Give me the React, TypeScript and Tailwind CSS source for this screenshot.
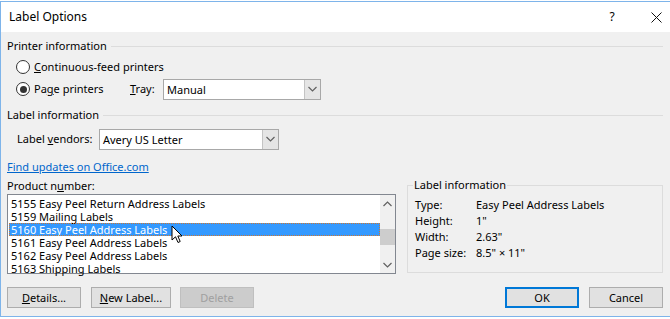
import React from 'react';

const items = [
  '5155 Easy Peel Return Address Labels',
  '5159 Mailing Labels',
  '5160 Easy Peel Address Labels',
  '5161 Easy Peel Address Labels',
  '5162 Easy Peel Address Labels',
  '5163 Shipping Labels',
];

const info = [
  ['Type:', 'Easy Peel Address Labels'],
  ['Height:', '1"'],
  ['Width:', '2.63"'],
  ['Page size:', '8.5" \u00d7 11"'],
];

function Chevron({ up = false }: { up?: boolean }) {
  return (
    <svg width="9" height="6" viewBox="0 0 9 6" className="block">
      <path d={up ? 'M0.5 5 L4.5 1 L8.5 5' : 'M0.5 1 L4.5 5 L8.5 1'} fill="none" stroke="#606060" strokeWidth="1.2" />
    </svg>
  );
}

function Radio({ checked, children }: { checked?: boolean; children: React.ReactNode }) {
  return (
    <div className="flex items-center h-4 whitespace-nowrap">
      <span className="w-[14px] h-[14px] rounded-full border border-[#333] bg-white flex items-center justify-center ml-[9px]">
        {checked && <span className="w-[7px] h-[7px] rounded-full bg-[#333]" />}
      </span>
      <span className="ml-[4px]">{children}</span>
    </div>
  );
}

function Select({ value, width }: { value: string; width: string }) {
  return (
    <div className={`${width} h-[21px] border border-[#a8a8a8] bg-white flex`}>
      <span className="flex-1 pl-[3px] leading-[19px]">{value}</span>
      <span className="w-[16px] bg-[#e5e5e5] border-l border-[#c4c4c4] flex items-center justify-center">
        <Chevron />
      </span>
    </div>
  );
}

function Section({ title }: { title: string }) {
  return (
    <div className="flex items-center h-4">
      <span>{title}</span>
      <span className="flex-1 h-px bg-[#dcdcdc] ml-[4px] mr-[7px]" />
    </div>
  );
}

function Btn({ children, disabled, primary, className = '' }: { children: React.ReactNode; disabled?: boolean; primary?: boolean; className?: string }) {
  return (
    <div
      className={`h-[21px] flex items-center justify-center ${className} ${
        disabled
          ? 'bg-[#cccccc] border border-[#bfbfbf] text-[#a0a0a0]'
          : primary
          ? 'bg-[#e1e1e1] border-2 border-[#0078d7]'
          : 'bg-[#e1e1e1] border border-[#adadad]'
      }`}
    >
      {children}
    </div>
  );
}

export default function App() {
  return (
    <div className="w-[670px] h-[319px] bg-white overflow-hidden text-[11px] text-black font-['Noto_Sans',sans-serif] leading-4 relative">
      <div className="h-[1px] bg-white" />
      <div className="h-[316px] border-t border-l border-b border-[#7eb4ea] flex flex-col">
        {/* title bar */}
        <div className="h-[30px] bg-white flex items-center pl-[8px] shrink-0 text-[12px]">
          <span className="flex-1">Label Options</span>
          <span className="w-[20px] text-center">?</span>
          <span className="w-[24px] ml-[22px] mr-[2px] flex justify-center">
            <svg width="11" height="11" viewBox="0 0 11 11">
              <path d="M0.5 0.5 L10.5 10.5 M10.5 0.5 L0.5 10.5" stroke="#111" strokeWidth="1" />
            </svg>
          </span>
        </div>

        {/* body */}
        <div className="flex-1 bg-[#f0f0f0] pl-[6px] flex flex-col">
          <div className="mt-[6px]">
            <Section title="Printer information" />
          </div>
          <div className="mt-[5px]">
            <Radio>
              <u>C</u>ontinuous-feed printers
            </Radio>
          </div>
          <div className="mt-[3px] flex items-center h-[22px]">
            <div className="w-[123px]">
              <Radio checked>
                Pa<u>g</u>e printers
              </Radio>
            </div>
            <span className="w-[33px]">
              <u>T</u>ray:
            </span>
            <Select value="Manual" width="w-[158px]" />
          </div>

          <div className="mt-[7px]">
            <Section title="Label information" />
          </div>
          <div className="mt-[5px] flex items-center h-[22px]">
            <span className="ml-[10px] w-[82px] whitespace-nowrap">
              Label <u>v</u>endors:
            </span>
            <Select value="Avery US Letter" width="w-[180px]" />
          </div>

          <div className="mt-[9px] h-4 text-[#0066cc] underline">Find updates on Office.com</div>

          <div className="mt-[3px] flex">
            {/* product list */}
            <div className="flex flex-col">
              <div className="h-4">
                Product n<u>u</u>mber:
              </div>
              <div className="w-[389px] h-[80px] border border-[#828790] bg-white flex">
                <div className="flex-1 pt-[2px] pl-[1px]">
                  {items.map((t, i) =>
                    i === 2 ? (
                      <div key={t} className="h-[13px] leading-[13px] bg-[#3399ff] text-white pl-[2px] outline outline-1 outline-dotted outline-[#cc7733] -outline-offset-1">
                        {t}
                      </div>
                    ) : (
                      <div key={t} className="h-[13px] leading-[13px] pl-[2px]">
                        {t}
                      </div>
                    )
                  )}
                </div>
                <div className="w-[15px] bg-[#f0f0f0] flex flex-col items-center">
                  <div className="h-[17px] flex items-center justify-center">
                    <Chevron up />
                  </div>
                  <div className="mt-[17px] w-[15px] h-[16px] bg-[#cdcdcd]" />
                  <div className="flex-1" />
                  <div className="h-[17px] flex items-center justify-center">
                    <Chevron />
                  </div>
                </div>
              </div>
            </div>

            {/* label info group */}
            <div className="ml-[11px] mt-[7px] w-[256px] h-[88px] border border-[#dcdcdc] relative">
              <span className="absolute -top-[9px] left-[5px] bg-[#f0f0f0] px-[1px]">Label information</span>
              <div className="pt-[11px] pl-[7px] flex flex-col">
                {info.map(([k, v]) => (
                  <div key={k} className="flex h-4">
                    <span className="w-[61px]">{k}</span>
                    <span>{v}</span>
                  </div>
                ))}
              </div>
            </div>
          </div>

          <div className="mt-[13px] flex items-center">
            <Btn className="w-[74px]">
              <u>D</u>etails...
            </Btn>
            <Btn className="ml-[10px] w-[80px]">
              <u>N</u>ew Label...
            </Btn>
            <Btn disabled className="ml-[9px] w-[74px]">
              Delete
            </Btn>
            <div className="flex-1" />
            <Btn primary className="w-[74px]">
              OK
            </Btn>
            <Btn className="ml-[10px] mr-[7px] w-[74px]">Cancel</Btn>
          </div>
        </div>
      </div>

      {/* mouse pointer */}
      <svg className="absolute left-[171px] top-[225px]" width="13" height="19" viewBox="0 0 13 19">
        <path d="M1 1 L1 15 L4.5 11.8 L7 17.5 L9.2 16.5 L6.8 11 L11 11 Z" fill="#fff" stroke="#000" strokeWidth="1" strokeLinejoin="miter" />
      </svg>
    </div>
  );
}
